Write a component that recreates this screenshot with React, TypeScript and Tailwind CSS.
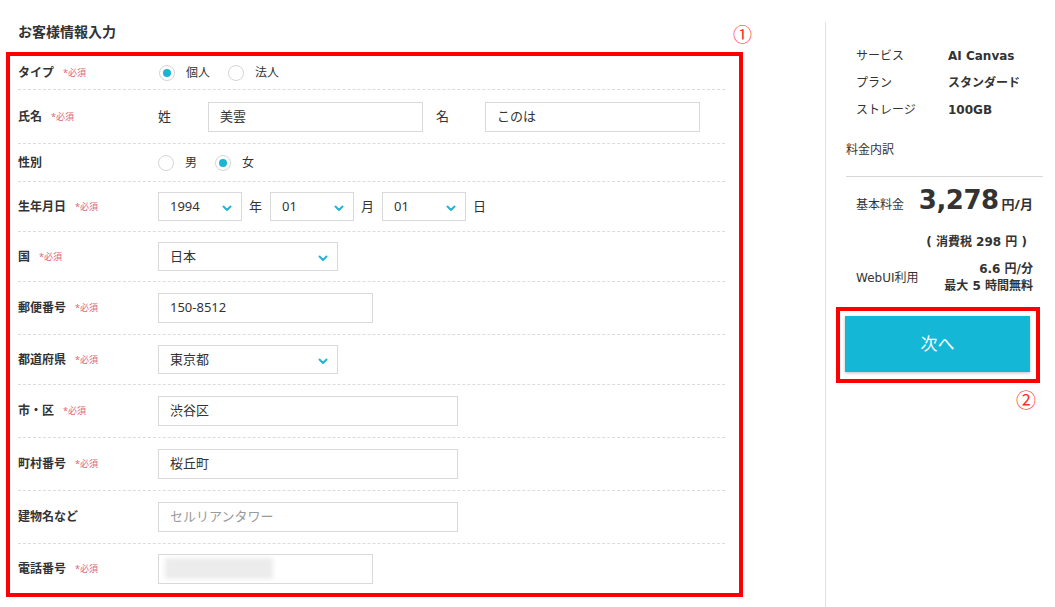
import type { ReactNode } from 'react';

const jp = "font-['Noto_Sans','Noto_Sans_CJK_JP',sans-serif]";
const vd = "font-['DejaVu_Sans','Noto_Sans_CJK_JP',sans-serif]";

function Chevron() {
  return (
    <svg width="10" height="7" viewBox="0 0 10 7" className="mt-[3px] shrink-0">
      <polyline points="1.5,1.5 5,5 8.5,1.5" fill="none" stroke="#22b5d6" strokeWidth="2" strokeLinecap="round" strokeLinejoin="round" />
    </svg>
  );
}

function Radio({ checked, label }: { checked?: boolean; label: string }) {
  return (
    <div className="flex items-center">
      <span className="flex h-[16px] w-[16px] items-center justify-center rounded-full border border-[#d5d5d5] bg-white">
        {checked && <span className="h-[8px] w-[8px] rounded-full bg-[#1bb4d6]" />}
      </span>
      <span className="ml-[11px] text-[12px] text-[#333]">{label}</span>
    </div>
  );
}

function Field({ w, value, placeholder }: { w: string; value?: string; placeholder?: string }) {
  return (
    <div className={`${w} flex h-[30px] items-center border border-[#d9d9d9] bg-white pl-[11px] text-[13px]`}>
      {value ? <span className="text-[#333]">{value}</span> : <span className="text-[#9a9a9a]">{placeholder}</span>}
    </div>
  );
}

function Select({ w, value }: { w: string; value: string }) {
  return (
    <div className={`${w} flex h-[29px] items-center justify-between border border-[#d9d9d9] bg-white pl-[11px] pr-[9px] text-[13px] text-[#333]`}>
      <span>{value}</span>
      <Chevron />
    </div>
  );
}

function Row({ h, label, required, last, children }: { h: string; label: string; required?: boolean; last?: boolean; children: ReactNode }) {
  return (
    <div className={`${h} flex items-center ${last ? '' : 'border-b border-dashed border-[#dcdcdc]'}`}>
      <div className="flex w-[140px] items-center">
        <span className="text-[12px] font-bold text-[#333]">{label}</span>
        {required && <span className="ml-[9px] text-[9px] text-[#e0647c]">*必須</span>}
      </div>
      <div className="flex items-center">{children}</div>
    </div>
  );
}

export default function App() {
  return (
    <div className={`${jp} flex h-[607px] w-[1055px] overflow-hidden bg-white text-[#333]`}>
      <div className="w-[825px] shrink-0 pl-[6px] pt-[22px]">
        <div className="h-[20px] pl-[12px] text-[14px] font-bold leading-[20px]">お客様情報入力</div>
        <div className="relative mt-[10px] w-[737px] border-4 border-[#ff0000] pl-[8px] pr-[14px]">
          <span className="absolute left-[723px] top-[-33px] text-[19px] leading-[24px] text-[#ff2a2a]">①</span>
          <Row h="h-[34px]" label="タイプ" required>
            <div className="flex items-center gap-[18px] pl-[1px]">
              <Radio checked label="個人" />
              <Radio label="法人" />
            </div>
          </Row>
          <Row h="h-[54px]" label="氏名" required>
            <span className="w-[50px] text-[13px]">姓</span>
            <Field w="w-[215px]" value="美雲" />
            <span className="w-[62px] pl-[13px] text-[13px]">名</span>
            <Field w="w-[215px]" value="このは" />
          </Row>
          <Row h="h-[38px]" label="性別">
            <div className="flex items-center gap-[18px]">
              <Radio label="男" />
              <Radio checked label="女" />
            </div>
          </Row>
          <Row h="h-[50px]" label="生年月日" required>
            <Select w="w-[84px]" value="1994" />
            <span className="w-[28px] pl-[7px] text-[13px]">年</span>
            <Select w="w-[84px]" value="01" />
            <span className="w-[28px] pl-[7px] text-[13px]">月</span>
            <Select w="w-[84px]" value="01" />
            <span className="pl-[7px] text-[13px]">日</span>
          </Row>
          <Row h="h-[50px]" label="国" required>
            <Select w="w-[180px]" value="日本" />
          </Row>
          <Row h="h-[53px]" label="郵便番号" required>
            <Field w="w-[215px]" value="150-8512" />
          </Row>
          <Row h="h-[50px]" label="都道府県" required>
            <Select w="w-[180px]" value="東京都" />
          </Row>
          <Row h="h-[53px]" label="市・区" required>
            <Field w="w-[300px]" value="渋谷区" />
          </Row>
          <Row h="h-[53px]" label="町村番号" required>
            <Field w="w-[300px]" value="桜丘町" />
          </Row>
          <Row h="h-[53px]" label="建物名など">
            <Field w="w-[300px]" placeholder="セルリアンタワー" />
          </Row>
          <Row h="h-[49px]" label="電話番号" required last>
            <div className="flex h-[30px] w-[215px] items-center border border-[#d9d9d9] bg-white pl-[6px]">
              <div className="h-[21px] w-[108px] bg-[#ececec] blur-[2px]" />
            </div>
          </Row>
        </div>
      </div>

      <div className="mt-[22px] h-[585px] w-[230px] shrink-0 border-l border-[#e2e2e2] pl-[20px] text-[12px]">
        <div className="pl-[10px] pt-[20px]">
          {[
            ['サービス', 'AI Canvas'],
            ['プラン', 'スタンダード'],
            ['ストレージ', '100GB'],
          ].map(([k, v]) => (
            <div key={k} className="flex h-[27px] items-center">
              <span className="w-[92px]">{k}</span>
              <span className={`${vd} font-bold`}>{v}</span>
            </div>
          ))}
        </div>
        <div className="mt-[18px] h-[18px] leading-[18px]">料金内訳</div>
        <div className="mt-[17px] h-px w-[197px] bg-[#d8d8d8]" />
        <div className="mt-[4px] flex h-[34px] w-[187px] items-baseline justify-between pl-[10px]">
          <span>基本料金</span>
          <span className="flex items-baseline">
            <span className={`${vd} text-[26px] font-bold tracking-[-0.5px]`}>3,278</span>
            <span className="ml-[3px] text-[13px] font-bold">円/月</span>
          </span>
        </div>
        <div className={`${vd} mt-[18px] h-[18px] w-[181px] text-right text-[12px] font-bold leading-[18px]`}>( 消費税 298 円 )</div>
        <div className="mt-[10px] flex w-[187px] items-center justify-between pl-[10px]">
          <span className={vd}>WebUI利用</span>
          <div className={`${vd} text-right font-bold leading-[17px]`}>
            <div>6.6 円/分</div>
            <div>最大 5 時間無料</div>
          </div>
        </div>
        <div className="-ml-[10px] mt-[12px] w-[204px] border-4 border-[#ff0000] pb-[7px] pl-[5px] pr-[6px] pt-[5px]">
          <div className="flex h-[56px] items-center justify-center bg-[#15b7d6] text-[17px] text-white shadow-[0_1px_3px_rgba(0,0,0,0.25)]">
            次へ
          </div>
        </div>
        <div className="mt-[6px] w-[190px] text-right text-[20px] leading-[24px] text-[#ff2a2a]">②</div>
      </div>
    </div>
  );
}
